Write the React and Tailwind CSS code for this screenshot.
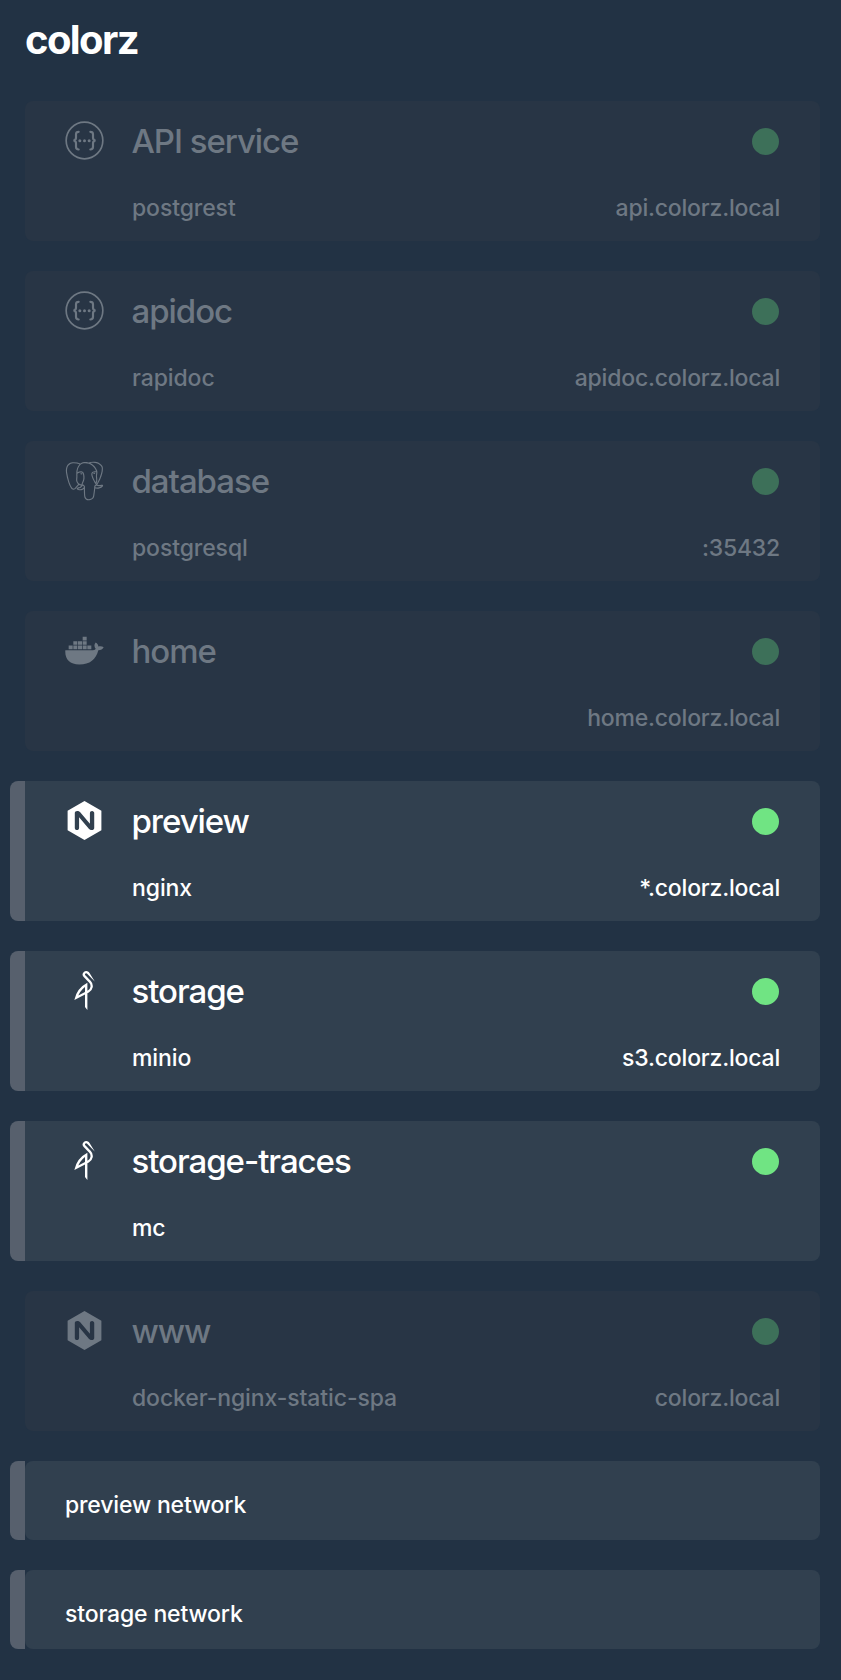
import { SiMinio, SiNginx } from "react-icons/si";
import { DiPostgresql } from "react-icons/di";

function Api() {
  return (
    <svg viewBox="45 32.5 117 117" className="size-[39px]" fill="none" stroke="currentColor" strokeWidth="5" strokeLinecap="round">
      <circle cx="103.5" cy="91" r="55" />
      <path strokeWidth="6.5" d="M86 65c-6 0-8 2-8 7v10c0 5-2 9-8 9 6 0 8 4 8 9v10c0 5 2 8 8 8M121 65c6 0 8 2 8 7v10c0 5 2 9 8 9-6 0-8 4-8 9v10c0 5-2 8-8 8" />
      <g fill="currentColor" stroke="none">
        <circle cx="89.5" cy="91.5" r="4.5" />
        <circle cx="103.5" cy="91.5" r="4.5" />
        <circle cx="117.5" cy="91.5" r="4.5" />
      </g>
    </svg>
  );
}

function Docker() {
  return (
    <svg viewBox="45 17.5 117 117" className="size-[39px]" fill="currentColor">
      <path d="M98 35h12v11H98zM70 48h12v11H70zM84 48h12v11H84zM98 48h12v11H98zM56 61h12v11H56zM70 61h12v11H70zM84 61h12v11H84zM98 61h12v11H98zM112 61h12v11H112z" />
      <path d="M46 75H129c5 0 7-2 8-4c-5-6-5-14 0-19c5 3 8 7 8 12c5-2 12-1 16 2c-3 6-8 9-16 9C138 102 120 118 88 118C58 118 44 101 46 75z" />
    </svg>
  );
}

const icons = {
  api: <Api />,
  postgres: <DiPostgresql className="-m-2 size-[55px]" />,
  docker: <Docker />,
  nginx: <SiNginx className="size-[39px]" />,
  minio: <SiMinio className="size-[39px]" />,
};

const services = [
  { name: "API service", icon: "api", image: "postgrest", host: "api.colorz.local" },
  { name: "apidoc", icon: "api", image: "rapidoc", host: "apidoc.colorz.local" },
  { name: "database", icon: "postgres", image: "postgresql", host: ":35432" },
  { name: "home", icon: "docker", image: "", host: "home.colorz.local" },
  { name: "preview", icon: "nginx", image: "nginx", host: "*.colorz.local", active: true },
  { name: "storage", icon: "minio", image: "minio", host: "s3.colorz.local", active: true },
  { name: "storage-traces", icon: "minio", image: "mc", host: "", active: true },
  { name: "www", icon: "nginx", image: "docker-nginx-static-spa", host: "colorz.local" },
];

function Service({ name, icon, image, host, active }) {
  return (
    <article className={active ? "flex h-[140px] text-white" : "flex h-[140px] text-[#6e7883]"}>
      <div className={active ? "w-[15px] rounded-l-lg bg-[#57606d]" : "w-[15px]"} />
      <div className={active ? "flex flex-1 flex-col rounded-r-lg bg-[#31404f] pr-[41px] pl-10" : "flex flex-1 flex-col rounded-lg bg-[#283545] pr-[41px] pl-10"}>
        <div className="flex h-[78px] items-center">
          {icons[icon]}
          <h2 className="ml-[27.5px] flex-1 pt-[3px] text-[33px] font-[450] tracking-[-1.05px]">{name}</h2>
          <span className={active ? "mt-[2.5px] size-[27.5px] rounded-full bg-[#70e483]" : "mt-[2.5px] size-[27.5px] rounded-full bg-[#3d7059]"} />
        </div>
        <div className="flex justify-between pt-[13px] pl-[67px] text-[23px] leading-8 font-[450]">
          <span className="tracking-[-0.1px]">{image}</span>
          <span className="-mr-px tracking-[-0.2px]">{host}</span>
        </div>
      </div>
    </article>
  );
}

function Network({ name }) {
  return (
    <div className="flex h-[79px] text-white">
      <div className="w-[15px] rounded-l-lg bg-[#57606d]" />
      <div className="flex flex-1 items-center rounded-lg bg-[#31404f] pt-2.5 pl-10 text-[23px] font-[450] tracking-[-0.15px]">{name}</div>
    </div>
  );
}

export default function App() {
  return (
    <main className="h-[1680px] bg-[#223244] pr-[21px] pl-2.5 font-['Inter',sans-serif]">
      <h1 className="h-[101px] pt-[15px] pl-[15px] text-[40px] leading-[50px] font-bold tracking-[-1.6px] text-white">colorz</h1>
      <div className="flex flex-col gap-[30px]">
        {services.map((s) => <Service key={s.name} {...s} />)}
        <Network name="preview network" />
        <Network name="storage network" />
      </div>
    </main>
  );
}
